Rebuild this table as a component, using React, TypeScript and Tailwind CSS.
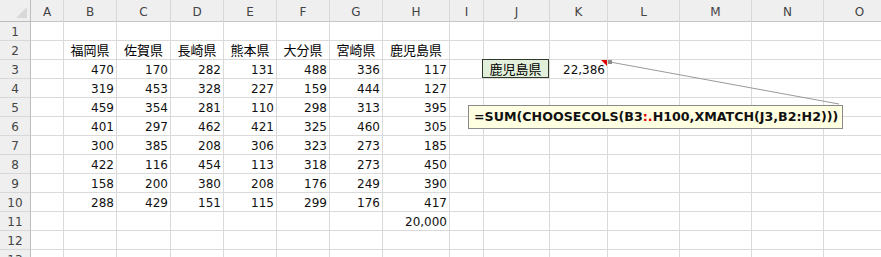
import React from "react";

const COLS = ["A", "B", "C", "D", "E", "F", "G", "H", "I", "J", "K", "L", "M", "N", "O"];
const PREFS = ["福岡県", "佐賀県", "長崎県", "熊本県", "大分県", "宮崎県", "鹿児島県"];
const DATA: number[][] = [
  [470, 170, 282, 131, 488, 336, 117],
  [319, 453, 328, 227, 159, 444, 127],
  [459, 354, 281, 110, 298, 313, 395],
  [401, 297, 462, 421, 325, 460, 305],
  [300, 385, 208, 306, 323, 273, 185],
  [422, 116, 454, 113, 318, 273, 450],
  [158, 200, 380, 208, 176, 249, 390],
  [288, 429, 151, 115, 299, 176, 417],
];

const NUM_FONT = "font-['DejaVu_Sans','Noto_Sans_CJK_JP',sans-serif]";
const CJK_FONT = "font-['Noto_Sans_CJK_JP','Noto_Sans',sans-serif]";

function cellContent(row: number, col: number): React.ReactNode {
  // col: 0 = A ... 14 = O
  if (row === 2 && col >= 1 && col <= 7) {
    return (
      <div className={`flex h-full w-full items-center justify-center text-[13px] text-black ${CJK_FONT}`}>
        {PREFS[col - 1]}
      </div>
    );
  }
  if (row >= 3 && row <= 10 && col >= 1 && col <= 7) {
    return (
      <div className={`flex h-full w-full items-center justify-end pr-[2px] pt-[1px] text-[12px] text-[#111] ${NUM_FONT}`}>
        {DATA[row - 3][col - 1]}
      </div>
    );
  }
  if (row === 11 && col === 7) {
    return (
      <div className={`flex h-full w-full items-center justify-end pr-[2px] pt-[1px] text-[12px] text-[#111] ${NUM_FONT}`}>
        20,000
      </div>
    );
  }
  if (row === 3 && col === 9) {
    return (
      <div className="relative h-full w-full">
        <div className={`absolute left-[-2px] top-[-1px] right-0 bottom-0 flex items-center justify-center border border-[#2f3a2a] bg-[#e2efda] text-[13px] text-black ${CJK_FONT}`}>
          鹿児島県
        </div>
      </div>
    );
  }
  if (row === 3 && col === 10) {
    return (
      <div className={`relative flex h-full w-full items-center justify-end pr-[2px] pt-[1px] text-[12px] text-[#111] ${NUM_FONT}`}>
        22,386
      </div>
    );
  }
  return null;
}

export default function App() {
  const rows = Array.from({ length: 13 }, (_, i) => i + 1);
  return (
    <div className="relative h-[257px] w-[881px] overflow-hidden bg-white">
      <div className="grid grid-cols-[31px_33px_53px_54px_53px_53px_53px_53px_67px_34px_66px_58px_72px_72px_72px_72px] grid-rows-[22px_repeat(13,19px)]">
        {/* corner */}
        <div className="relative border-b border-r border-[#bdbdbd] bg-[#efefef]">
          <svg className="absolute right-[3px] bottom-[3px]" width="11" height="11" viewBox="0 0 11 11">
            <polygon points="11,0 11,11 0,11" fill="#d8d8d8" />
          </svg>
        </div>
        {COLS.map((c) => (
          <div
            key={c}
            className={`flex items-center justify-center border-b border-r border-b-[#c6c6c6] border-r-[#d8d8d8] bg-[#efefef] pt-[2px] text-[12px] text-[#444] ${NUM_FONT}`}
          >
            {c}
          </div>
        ))}
        {rows.map((r) => (
          <React.Fragment key={r}>
            <div
              className={`flex items-center justify-center border-b border-r border-b-[#d8d8d8] border-r-[#bdbdbd] bg-[#efefef] pt-[1px] text-[12px] text-[#444] ${NUM_FONT}`}
            >
              {r}
            </div>
            {COLS.map((c, ci) => (
              <div key={c} className="border-b border-r border-[#dadada]">
                {cellContent(r, ci)}
              </div>
            ))}
          </React.Fragment>
        ))}
      </div>

      {/* precedent arrow */}
      <svg className="pointer-events-none absolute left-0 top-0" width="881" height="257">
        <line x1="610" y1="62" x2="839" y2="104" stroke="#9a9a9a" strokeWidth="1" />
        <rect x="608" y="60" width="4" height="4" fill="#8c8c8c" />
        <polygon points="601,60 607,60 607,66" fill="#e00000" />
      </svg>

      {/* formula callout */}
      <div
        className={`absolute left-[468px] top-[105px] flex h-[24px] w-[375px] items-center border border-[#8a8a8a] bg-[#ffffe1] pl-[5px] pt-[1px] text-[12.65px] font-bold text-[#111] ${NUM_FONT}`}
      >
        <span className="whitespace-pre">
          =SUM(CHOOSECOLS(B3<span className="text-[#e00000]">:.</span>H100,XMATCH(J3,B2:H2)))
        </span>
      </div>
    </div>
  );
}
